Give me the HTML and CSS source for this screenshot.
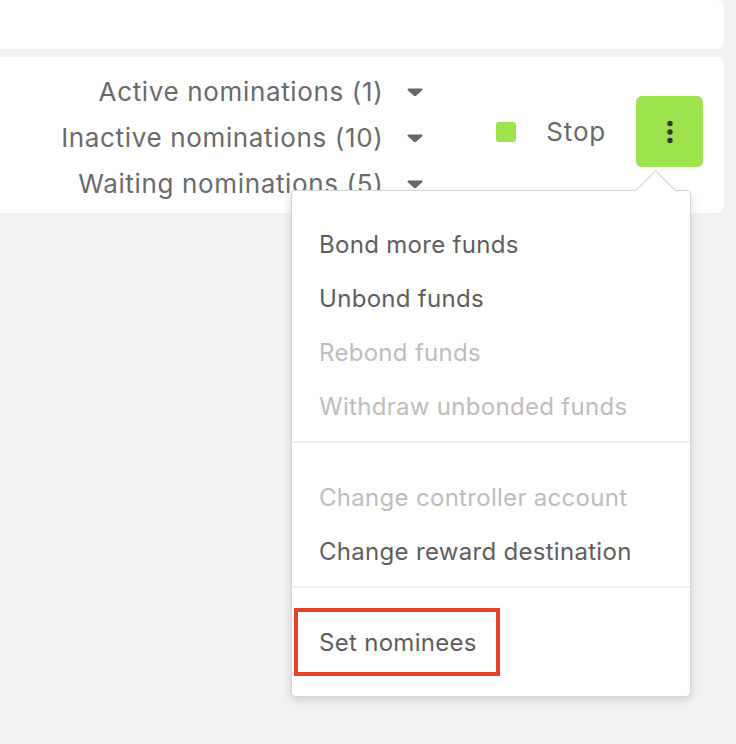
FILE: index.html
```html
<!DOCTYPE html>
<html lang="en">
<head>
<meta charset="utf-8">
<title>Staking actions</title>
<link rel="stylesheet" href="styles.css">
</head>
<body>
<div class="page">
  <div class="card card-top"></div>
  <div class="card card-main">
    <div class="noms">
      <div class="nom"><span>Active nominations (1)</span><svg class="caret" viewBox="0 0 16 8"><path d="M1.5 0.5h13a1 1 0 0 1 .7 1.7l-5.8 5.3a2 2 0 0 1-2.8 0L0.8 2.2A1 1 0 0 1 1.5 0.5z"/></svg></div>
      <div class="nom"><span>Inactive nominations (10)</span><svg class="caret" viewBox="0 0 16 8"><path d="M1.5 0.5h13a1 1 0 0 1 .7 1.7l-5.8 5.3a2 2 0 0 1-2.8 0L0.8 2.2A1 1 0 0 1 1.5 0.5z"/></svg></div>
      <div class="nom"><span>Waiting nominations (5)</span><svg class="caret" viewBox="0 0 16 8"><path d="M1.5 0.5h13a1 1 0 0 1 .7 1.7l-5.8 5.3a2 2 0 0 1-2.8 0L0.8 2.2A1 1 0 0 1 1.5 0.5z"/></svg></div>
    </div>
    <div class="status">
      <span class="square"></span>
      <span class="stop">Stop</span>
    </div>
    <div class="menu-wrap">
      <button class="kebab" type="button" aria-label="More actions">
        <svg viewBox="0 0 10 24" width="10" height="24"><circle cx="5" cy="3.5" r="2.7"/><circle cx="5" cy="12" r="2.7"/><circle cx="5" cy="20.5" r="2.7"/></svg>
      </button>
      <div class="menu">
        <div class="arrow"></div>
        <div class="group">
          <div class="item">Bond more funds</div>
          <div class="item">Unbond funds</div>
          <div class="item disabled">Rebond funds</div>
          <div class="item disabled">Withdraw unbonded funds</div>
        </div>
        <div class="group">
          <div class="item disabled">Change controller account</div>
          <div class="item">Change reward destination</div>
        </div>
        <div class="group group-last">
          <div class="item highlight">Set nominees</div>
        </div>
      </div>
    </div>
  </div>
</div>
</body>
</html>
```

FILE: styles.css
```css
html, body {
  margin: 0;
  padding: 0;
}

body {
  background: #f3f2f0;
  font-family: Inter, "Liberation Sans", sans-serif;
  color: #616161;
  width: 736px;
  height: 744px;
  overflow: hidden;
}

.page {
  padding-right: 12px;
  display: flex;
  flex-direction: column;
  gap: 8px;
}

.card {
  background: #ffffff;
  border-radius: 0 8px 8px 0;
}

.card-top {
  height: 49px;
}

.card-main {
  height: 156px;
  display: flex;
  justify-content: flex-end;
  align-items: center;
  padding-right: 21px;
}

.noms {
  display: flex;
  flex-direction: column;
  align-items: flex-end;
  margin-top: 6px;
  margin-right: 73px;
}

.nom {
  display: flex;
  align-items: center;
  gap: 24px;
  font-size: 26px;
  line-height: 46px;
  letter-spacing: 0.65px;
  color: #6a6a6a;
  white-space: nowrap;
}

.caret {
  width: 16px;
  height: 8px;
  fill: #666666;
  margin-top: -1px;
}

.status {
  display: flex;
  align-items: center;
  gap: 30px;
  margin-bottom: 6px;
  margin-right: 30px;
}

.square {
  width: 20px;
  height: 20px;
  border-radius: 3px;
  background: #9de34e;
}

.stop {
  font-size: 26px;
  line-height: 30px;
  letter-spacing: 0.8px;
  color: #6a6a6a;
}

.menu-wrap {
  position: relative;
  margin-bottom: 7px;
}

.kebab {
  width: 67px;
  height: 71px;
  border: 0;
  border-radius: 6px;
  background: #9de34e;
  padding: 0;
  display: flex;
  align-items: center;
  justify-content: center;
}

.kebab svg {
  fill: #353535;
  display: block;
}

.menu {
  position: absolute;
  top: calc(100% + 23px);
  right: 12px;
  width: 398px;
  background: #ffffff;
  border: 1px solid #d6d6d6;
  border-radius: 5px;
  box-shadow: 0 3px 10px rgba(0, 0, 0, 0.14);
  z-index: 2;
}

.arrow {
  position: absolute;
  top: -15px;
  left: 349px;
  width: 28px;
  height: 28px;
  background: #ffffff;
  border-top: 1px solid #cfcfcf;
  border-left: 1px solid #cfcfcf;
  transform: rotate(45deg);
}

.group {
  position: relative;
  padding: 27px 0 7px;
}

.group + .group {
  border-top: 2px solid #eeeeee;
  padding-top: 28px;
}

.group-last {
  padding-bottom: 26px;
}

.item {
  position: relative;
  height: 54px;
  line-height: 54px;
  padding-left: 27px;
  font-size: 24px;
  letter-spacing: 0.3px;
  color: #5e5e5e;
  white-space: nowrap;
}

.item.disabled {
  color: #bdbdbd;
}

.item.highlight::before {
  content: "";
  position: absolute;
  left: 2px;
  top: -8px;
  width: 198px;
  height: 60px;
  border: 4px solid #e8412a;
}
```
